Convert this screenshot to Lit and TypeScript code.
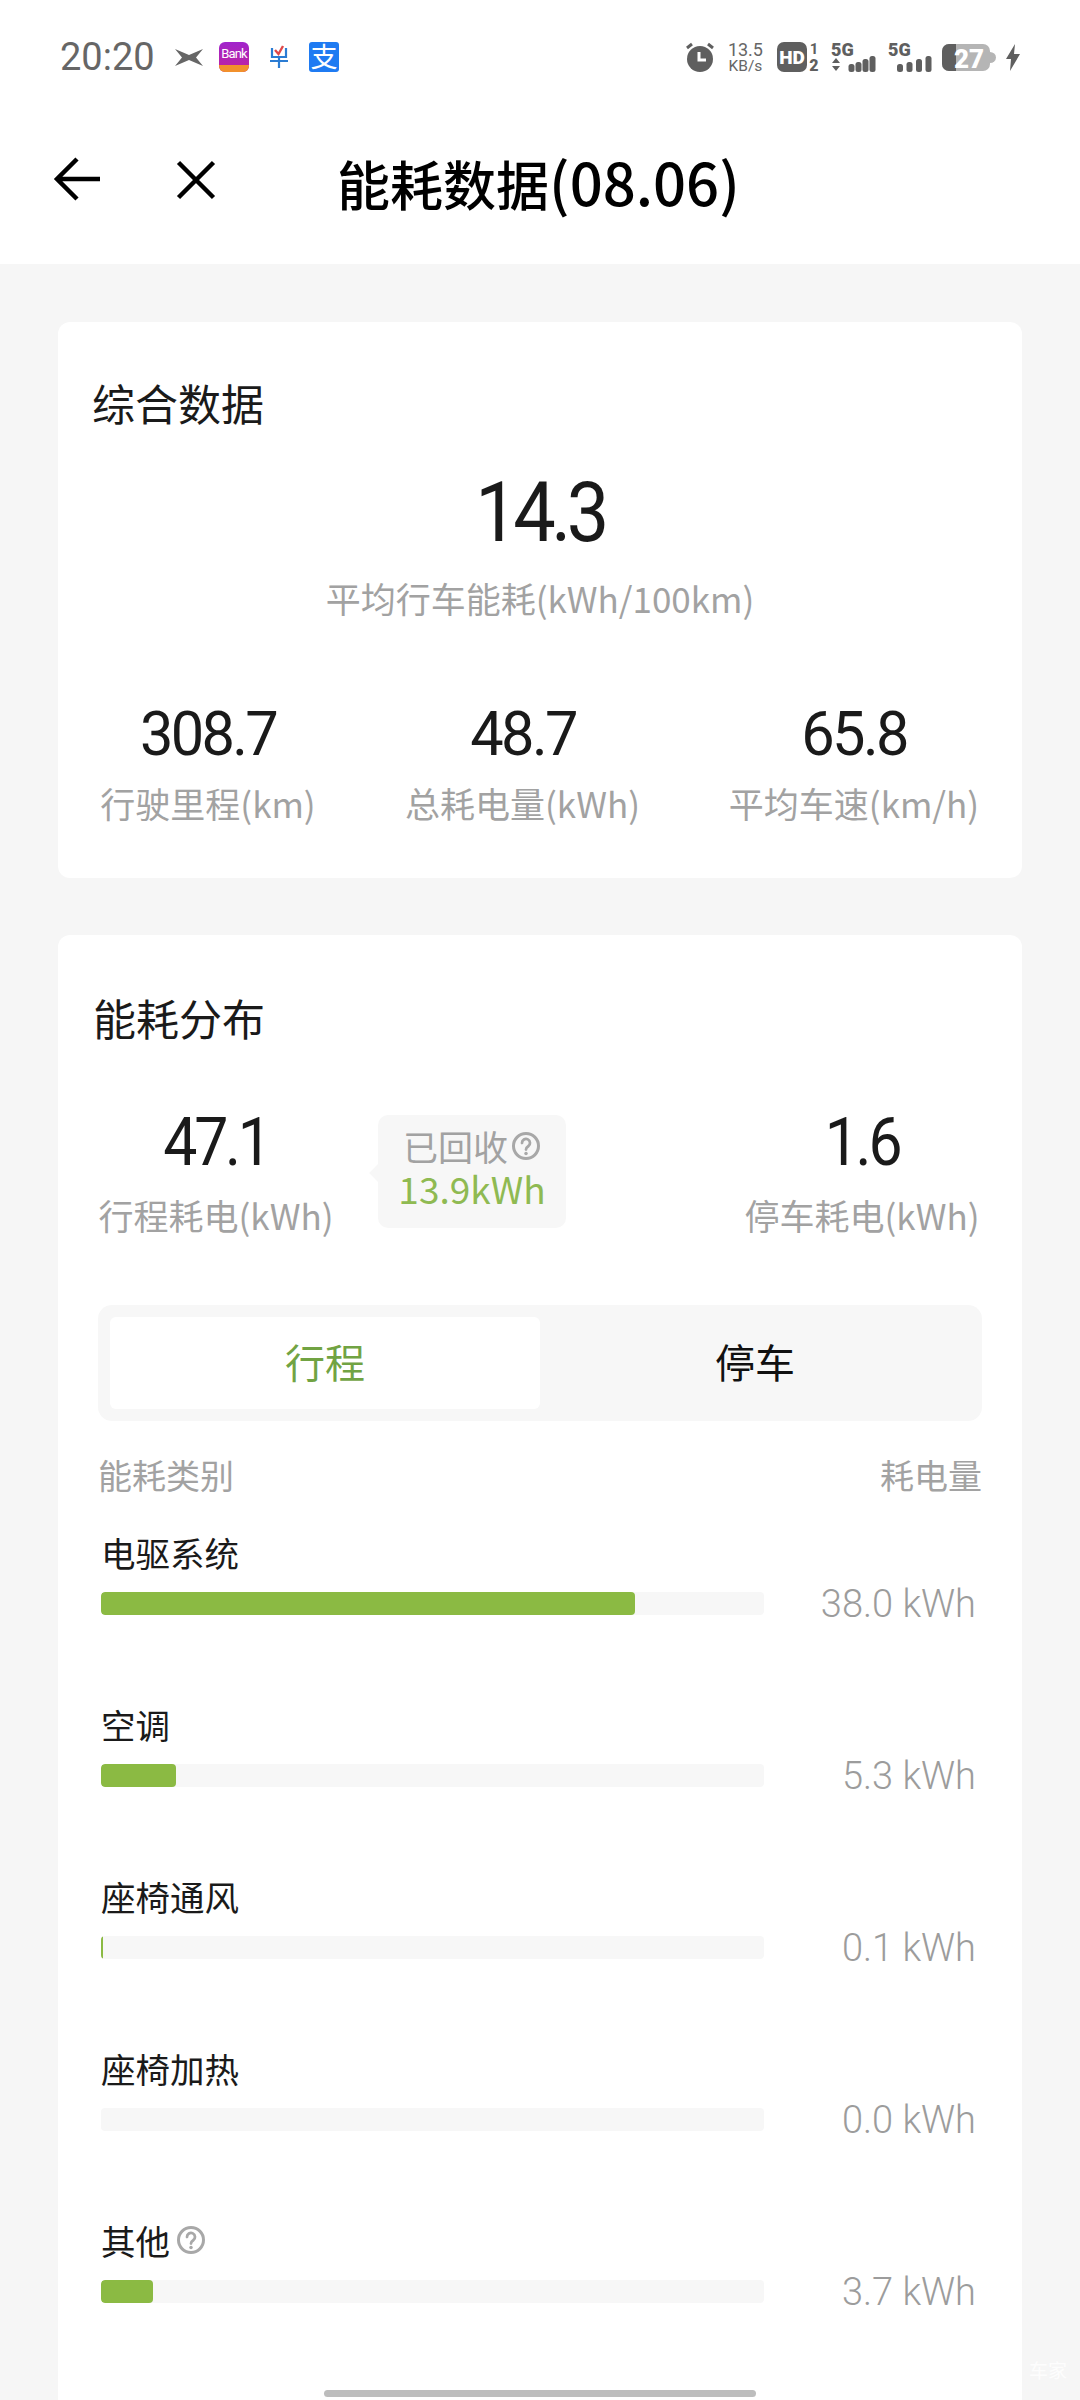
import { LitElement, html, css, svg } from 'lit';
import { customElement } from 'lit/decorators.js';

const helpIcon = (size: number) => html`
  <svg width=${size} height=${size} viewBox="0 0 24 24" fill="none">
    <circle cx="12" cy="12" r="10" stroke="#a8a8a8" stroke-width="2.4"></circle>
    <path d="M8.8 9.6a3.2 3.2 0 1 1 5 2.6c-1.2.8-1.8 1.4-1.8 2.6" stroke="#a8a8a8" stroke-width="2.2" stroke-linecap="round"></path>
    <circle cx="12" cy="18" r="1.4" fill="#a8a8a8"></circle>
  </svg>
`;

// signal bars, all sitting on the bottom of the 30px status icons
const signal = (x: number, step: number, w: number, levels: number[]) =>
  levels.map(
    (h, i) => svg`<rect x=${x + i * step} y=${30 - h} width=${w} height=${h} rx=${w / 2 - 0.5} fill="#5f5f5f"></rect>`,
  );

interface Usage {
  name: string;
  value: string;
  fill: number;
  help?: boolean;
}

const usages: Usage[] = [
  { name: '电驱系统', value: '38.0 kWh', fill: 534 },
  { name: '空调', value: '5.3 kWh', fill: 75 },
  { name: '座椅通风', value: '0.1 kWh', fill: 2 },
  { name: '座椅加热', value: '0.0 kWh', fill: 0 },
  { name: '其他', value: '3.7 kWh', fill: 52, help: true },
];

@customElement('app-root')
export class AppRoot extends LitElement {
  static styles = css`
    :host {
      display: block;
      position: relative;
      width: 1080px;
      height: 2400px;
      overflow: hidden;
      background: #f6f6f6;
      font-family: "Noto Sans CJK SC", Roboto, sans-serif;
      color: #111;
    }

    svg {
      overflow: visible;
    }

    .top {
      background: #fff;
      height: 264px;
    }

    .status {
      display: flex;
      align-items: center;
      height: 114px;
      padding: 0 60px;
    }

    .time {
      font-family: Roboto, sans-serif;
      font-size: 38px;
      color: #666;
      width: 115px;
    }

    .apps {
      display: flex;
      align-items: center;
      flex: 1;
    }

    .bank {
      width: 30px;
      height: 30px;
      margin-left: 16px;
      border-radius: 6px;
      overflow: hidden;
      background: linear-gradient(#a024cc, #c0229c);
      display: flex;
      flex-direction: column;
      color: #fff;
      font: 13px/23px Roboto, sans-serif;
      text-align: center;
      letter-spacing: -0.8px;
    }

    .bank i {
      height: 7px;
      background: #f2912c;
    }

    .early {
      margin-left: 21px;
    }

    .alipay {
      width: 30px;
      height: 30px;
      margin-left: 21px;
      border-radius: 3px;
      background: #1f7bf2;
      color: #fff;
      font-size: 27px;
      line-height: 27px;
      text-align: center;
    }

    .sys {
      display: flex;
      align-items: center;
      gap: 12px;
    }

    .sys .w2 {
      margin-left: 2px;
    }

    .sys .w1 {
      margin-left: 1px;
    }

    .sys .n2 {
      margin-left: -2px;
    }

    .speed {
      font-family: Roboto, sans-serif;
      color: #666;
      text-align: center;
      font-size: 18px;
      line-height: 18px;
    }

    .speed small {
      display: block;
      font-size: 15.5px;
      line-height: 15px;
    }

    .nav {
      display: flex;
      align-items: center;
      height: 134px;
    }

    .nav .back {
      margin: -5px 0 0 54px;
    }

    .nav .close {
      margin: -3px 0 0 77px;
    }

    .nav h1 {
      margin: 0 0 0 122px;
      font-size: 53px;
      font-weight: 500;
      line-height: 1;
      color: #000;
      white-space: nowrap;
    }

    .nav h1 span {
      font-size: 58px;
    }

    .card {
      background: #fff;
      border-radius: 12px;
      margin: 0 58px;
      box-sizing: border-box;
    }

    .summary {
      margin-top: 58px;
      height: 556px;
      padding: 56px 0 0 34px;
    }

    h2 {
      margin: 0;
      font-size: 43px;
      font-weight: 400;
      line-height: 48px;
      color: #1a1a1a;
    }

    .num {
      display: block;
      font-family: Roboto, sans-serif;
      color: #1a1a1a;
      line-height: 1;
      white-space: nowrap;
    }

    .unit {
      font-size: 35px;
      line-height: 40px;
      color: #a2a2a2;
      white-space: nowrap;
    }

    .avg {
      text-align: center;
      margin: 45px 0 0 -34px;
    }

    .avg .num {
      font-size: 84px;
      letter-spacing: -5px;
      margin: 4px 0 -4px;
      transform: scaleX(0.9);
    }

    .avg .unit {
      margin-top: 27px;
    }

    .stats {
      display: grid;
      grid-template-columns: 230px 250px 264px;
      column-gap: 74.5px;
      margin: 82px 0 0 1px;
      text-align: center;
    }

    .stats .num {
      font-size: 62px;
      letter-spacing: -2.8px;
      margin: 3px 0 -3px;
      transform: scaleX(0.96);
    }

    .stats .unit {
      margin-top: 21px;
    }

    .dist {
      margin-top: 57px;
      height: 1600px;
      padding: 58px 0 0 35px;
    }

    .parts {
      display: flex;
      align-items: flex-start;
      margin: 66px 0 0 3px;
    }

    .part {
      width: 240px;
      text-align: center;
    }

    .part .num {
      font-size: 66px;
      letter-spacing: -3.5px;
      margin: 3px 0 -3px;
      transform: scaleX(0.92);
    }

    .part .unit {
      margin-top: 22px;
    }

    .park {
      margin-left: 176px;
    }

    .recovered {
      position: relative;
      width: 188px;
      height: 113px;
      margin: 8px 0 0 42px;
      background: #f7f7f7;
      border-radius: 10px;
      text-align: center;
      box-sizing: border-box;
      padding-top: 10px;
    }

    .recovered::before {
      content: '';
      position: absolute;
      left: -6px;
      top: 51px;
      width: 14px;
      height: 14px;
      background: #f7f7f7;
      transform: rotate(45deg);
    }

    .recovered .lab {
      display: flex;
      align-items: center;
      justify-content: center;
      gap: 3px;
      font-size: 35px;
      line-height: 41px;
      color: #a2a2a2;
    }

    .recovered .kwh {
      font-size: 37px;
      line-height: 44px;
      color: #8fba52;
      white-space: nowrap;
    }

    .tabs {
      display: flex;
      box-sizing: border-box;
      width: 884px;
      height: 116px;
      margin: 70px 0 0 5px;
      padding: 12px;
      background: #f7f7f7;
      border-radius: 14px;
    }

    .tab {
      flex: 1;
      display: flex;
      align-items: center;
      justify-content: center;
      padding-bottom: 4px;
      font-size: 40px;
      color: #111;
      border-radius: 6px;
    }

    .tab.on {
      background: #fff;
      color: #71a343;
    }

    .heads {
      display: flex;
      justify-content: space-between;
      width: 884px;
      margin: 32px 0 0 5px;
      font-size: 34px;
      line-height: 44px;
      color: #a2a2a2;
    }

    .rows {
      margin-top: 33px;
    }

    .row {
      height: 172px;
      margin-left: 8px;
    }

    .row-name {
      display: flex;
      align-items: center;
      gap: 6px;
      font-size: 34.5px;
      line-height: 44px;
      color: #1a1a1a;
    }

    .row-line {
      display: flex;
      align-items: center;
      height: 23px;
      margin-top: 18px;
      width: 875px;
    }

    .track {
      width: 663px;
      height: 23px;
      background: #f7f7f7;
      border-radius: 4px;
      overflow: hidden;
    }

    .bar {
      height: 100%;
      background: #8bba43;
      border-radius: 4px;
    }

    .val {
      flex: 1;
      text-align: right;
      font-family: Roboto, sans-serif;
      font-size: 38px;
      font-weight: 300;
      color: #9c9c9c;
      white-space: nowrap;
    }

    .home {
      position: absolute;
      left: 324px;
      top: 2390px;
      width: 432px;
      height: 7px;
      border-radius: 4px;
      background: #bdbdbd;
    }

    .mark {
      position: absolute;
      left: 1029px;
      top: 2360px;
      font-size: 19px;
      line-height: 20px;
      color: rgba(255, 255, 255, 0.85);
      white-space: nowrap;
    }
  `;

  render() {
    return html`
      <div class="top">
        <div class="status">
          <span class="time">20:20</span>
          <div class="apps">
            <svg width="28" height="17" viewBox="0 0 28 17">
              <path d="M0 0 14 6 28 0 21 8.5 28 17 14 11 0 17 7 8.5Z" fill="#666"></path>
            </svg>
            <div class="bank">Bank<i></i></div>
            <svg class="early" width="18" height="22" viewBox="0 0 18 22" fill="none">
              <path d="M2 2v9h14V2M0 15h18M9 11v11" stroke="#2b7cd3" stroke-width="2.2"></path>
              <path d="M5 4l3.5 4L13 0" stroke="#e0484a" stroke-width="2.4"></path>
            </svg>
            <div class="alipay">支</div>
          </div>
          <div class="sys">
            <svg width="28" height="30" viewBox="0 0 28 30">
              <circle cx="14" cy="17" r="13" fill="#5f5f5f"></circle>
              <path d="M13 10v8h7" fill="none" stroke="#fff" stroke-width="3"></path>
              <path d="M1 6l5-4M27 6l-5-4" stroke="#5f5f5f" stroke-width="3"></path>
            </svg>
            <div class="speed w2">13.5<small>KB/s</small></div>
            <svg class="w2" width="42" height="30" viewBox="0 0 42 30">
              <rect width="30" height="30" rx="7" fill="#5f5f5f"></rect>
              <text x="15" y="22" text-anchor="middle" font-family="Roboto" font-weight="900" font-size="19" fill="#fff">HD</text>
              <text x="37" y="12" text-anchor="middle" font-family="Roboto" font-weight="700" font-size="15" fill="#5f5f5f">1</text>
              <text x="37" y="29" text-anchor="middle" font-family="Roboto" font-weight="900" font-size="16" fill="#5f5f5f">2</text>
            </svg>
            <svg width="44" height="30" viewBox="0 0 44 30">
              <text x="0" y="14" font-family="Roboto" font-weight="900" font-size="18" fill="#5f5f5f">5G</text>
              ${signal(17.5, 7, 6, [8, 10, 13, 16])}
              <path d="M1 21l4-5 4 5zM1 24l4 5 4-5z" fill="#5f5f5f"></path>
            </svg>
            <svg class="w1" width="44" height="30" viewBox="0 0 44 30">
              <text x="0" y="14" font-family="Roboto" font-weight="900" font-size="18" fill="#5f5f5f">5G</text>
              ${signal(9, 9.5, 6, [8, 10, 13, 16])}
            </svg>
            <svg class="n2" width="54" height="27" viewBox="0 0 54 27">
              <rect width="48" height="27" rx="7" fill="#b5b5b5"></rect>
              <path d="M7 0h7v27H7a7 7 0 0 1-7-7V7a7 7 0 0 1 7-7z" fill="#5f5f5f"></path>
              <path d="M48 8a6 5.5 0 0 1 0 11z" fill="#b5b5b5"></path>
              <text x="27" y="23.5" text-anchor="middle" font-family="Roboto" font-weight="900" font-size="26" fill="#fff">27</text>
            </svg>
            <svg class="n2" width="14" height="27" viewBox="0 0 14 27">
              <path d="M9 0 0 15h5l-1 12 10-17H8z" fill="#5f5f5f"></path>
            </svg>
          </div>
        </div>
        <div class="nav">
          <svg class="back" width="46" height="44" viewBox="0 0 46 44" fill="none">
            <path d="M23 2 3 22l20 20M3 22h43" stroke="#000" stroke-width="4.5"></path>
          </svg>
          <svg class="close" width="38" height="38" viewBox="0 0 38 38" fill="none">
            <path d="M1.5 1.5l35 35M36.5 1.5l-35 35" stroke="#000" stroke-width="4.5"></path>
          </svg>
          <h1>能耗数据<span>(08.06)</span></h1>
        </div>
      </div>

      <section class="card summary">
        <h2>综合数据</h2>
        <div class="avg">
          <span class="num">14.3</span>
          <div class="unit">平均行车能耗(kWh/100km)</div>
        </div>
        <div class="stats">
          <div><span class="num">308.7</span><div class="unit">行驶里程(km)</div></div>
          <div><span class="num">48.7</span><div class="unit">总耗电量(kWh)</div></div>
          <div><span class="num">65.8</span><div class="unit">平均车速(km/h)</div></div>
        </div>
      </section>

      <section class="card dist">
        <h2>能耗分布</h2>
        <div class="parts">
          <div class="part">
            <span class="num">47.1</span>
            <div class="unit">行程耗电(kWh)</div>
          </div>
          <div class="recovered">
            <div class="lab">已回收${helpIcon(30)}</div>
            <div class="kwh">13.9kWh</div>
          </div>
          <div class="part park">
            <span class="num">1.6</span>
            <div class="unit">停车耗电(kWh)</div>
          </div>
        </div>
        <div class="tabs">
          <div class="tab on">行程</div>
          <div class="tab">停车</div>
        </div>
        <div class="heads"><span>能耗类别</span><span>耗电量</span></div>
        <div class="rows">
          ${usages.map(
            (u) => html`
              <div class="row">
                <div class="row-name">${u.name}${u.help ? helpIcon(30) : ''}</div>
                <div class="row-line">
                  <div class="track"><div class="bar" style="width:${u.fill}px"></div></div>
                  <div class="val">${u.value}</div>
                </div>
              </div>
            `,
          )}
        </div>
      </section>

      <div class="home"></div>
      <div class="mark">车家</div>
    `;
  }
}
